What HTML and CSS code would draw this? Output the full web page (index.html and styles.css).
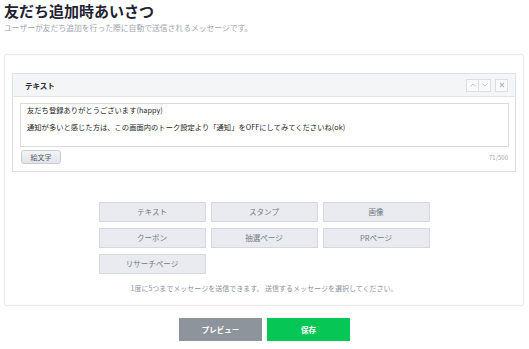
FILE: index.html
```html
<!DOCTYPE html>
<html lang="ja">
<head>
<meta charset="utf-8">
<link rel="stylesheet" href="styles.css">
</head>
<body>
<h1 class="title">友だち追加時あいさつ</h1>
<p class="subtitle">ユーザーが友だち追加を行った際に自動で送信されるメッセージです。</p>
<div class="panel">
  <div class="card">
    <div class="card-head">
      <span class="card-title">テキスト</span>
      <div class="controls">
        <span class="ctl ctl-up"><svg width="8" height="8" viewBox="0 0 8 8"><path d="M1.5 5.5 L4 3 L6.5 5.5" fill="none" stroke="#c4c7cf" stroke-width="1"/></svg></span>
        <span class="ctl ctl-down"><svg width="8" height="8" viewBox="0 0 8 8"><path d="M1.5 2.5 L4 5 L6.5 2.5" fill="none" stroke="#c4c7cf" stroke-width="1"/></svg></span>
        <span class="ctl ctl-close"><svg width="8" height="8" viewBox="0 0 8 8"><path d="M2 2 L6 6 M6 2 L2 6" fill="none" stroke="#b4b8c0" stroke-width="1.1"/></svg></span>
      </div>
    </div>
    <div class="card-body">
      <div class="textarea">
        <p class="msg">友だち登録ありがとうございます(happy)</p>
        <p class="msg">通知が多いと感じた方は、この画面内のトーク設定より「通知」をOFFにしてみてくださいね(ok)</p>
      </div>
      <div class="tools">
        <span class="emoji-btn">絵文字</span>
        <span class="counter">71/500</span>
      </div>
    </div>
  </div>
  <div class="types">
    <span class="type">テキスト</span>
    <span class="type">スタンプ</span>
    <span class="type">画像</span>
    <span class="type">クーポン</span>
    <span class="type">抽選ページ</span>
    <span class="type">PRページ</span>
    <span class="type">リサーチページ</span>
  </div>
  <p class="note">1度に5つまでメッセージを送信できます。 送信するメッセージを選択してください。</p>
</div>
<div class="actions">
  <span class="btn btn-preview">プレビュー</span>
  <span class="btn btn-save">保存</span>
</div>
</body>
</html>
```

FILE: styles.css
```css
* { box-sizing: border-box; }
body {
  margin: 0;
  padding: 0 5px 0 4px;
  background: #ffffff;
  font-family: "Noto Sans CJK JP", "Noto Sans", sans-serif;
  color: #2a2c34;
}
.title {
  margin: 0;
  padding: 0;
  font-size: 15px;
  line-height: 22px;
  font-weight: 700;
  color: #1f2230;
}
.subtitle {
  margin: 0;
  font-size: 7.8px;
  line-height: 12px;
  color: #a0a5b0;
}
.panel {
  margin-top: 20px;
  height: 252px;
  border: 1px solid #e8e9ee;
  border-radius: 2px;
  padding: 18px 7px 0 7px;
  display: flex;
  flex-direction: column;
  align-items: center;
}
.card {
  width: 100%;
  border: 1px solid #dfe0e5;
  background: #fff;
}
.card-head {
  height: 23px;
  background: #f4f5f7;
  border-bottom: 1px solid #e2e3e8;
  display: flex;
  align-items: center;
  justify-content: space-between;
  padding: 0 7px 0 12px;
}
.card-title {
  font-size: 7.5px;
  font-weight: 700;
  color: #2b2d36;
}
.controls {
  display: flex;
  align-items: center;
}
.ctl {
  width: 13px;
  height: 13px;
  border: 1px solid #dcdee4;
  background: #fafafb;
  display: flex;
  align-items: center;
  justify-content: center;
}
.ctl-down { margin-left: -1px; }
.ctl-close { margin-left: 4px; }
.card-body {
  padding: 6px 6px 7px 7px;
}
.textarea {
  height: 44px;
  border: 1px solid #d9dbe1;
  padding: 1px 6px;
}
.msg {
  margin: 0 0 6px 0;
  font-size: 7.3px;
  line-height: 11px;
  color: #1c1e26;
}
.tools {
  margin-top: 3px;
  display: flex;
  align-items: center;
  justify-content: space-between;
}
.emoji-btn {
  margin-left: 1px;
  width: 40px;
  height: 14px;
  border: 1px solid #c9ccd3;
  border-radius: 3px;
  background: linear-gradient(#f3f4f6, #e2e4e9);
  font-size: 7px;
  line-height: 12px;
  text-align: center;
  color: #555a66;
}
.counter {
  font-size: 6px;
  color: #a3a7b0;
  padding-right: 1px;
}
.types {
  margin-top: 30px;
  width: 331px;
  display: grid;
  grid-template-columns: repeat(3, 107px);
  column-gap: 5px;
  row-gap: 6px;
}
.type {
  height: 20px;
  background: #e9ebf0;
  border: 1px solid #d6d8df;
  font-size: 7.5px;
  line-height: 18px;
  text-align: center;
  color: #737884;
}
.note {
  margin: 9px 0 0 0;
  font-size: 7px;
  line-height: 10px;
  color: #8e939d;
}
.actions {
  margin-top: 12px;
  display: flex;
  justify-content: center;
  gap: 5px;
  padding-left: 1px;
}
.btn {
  width: 83px;
  height: 23px;
  font-size: 7.5px;
  font-weight: 700;
  line-height: 23px;
  text-align: center;
  color: #ffffff;
}
.btn-preview { background: #8e949b; }
.btn-save { background: #06c755; }
```
